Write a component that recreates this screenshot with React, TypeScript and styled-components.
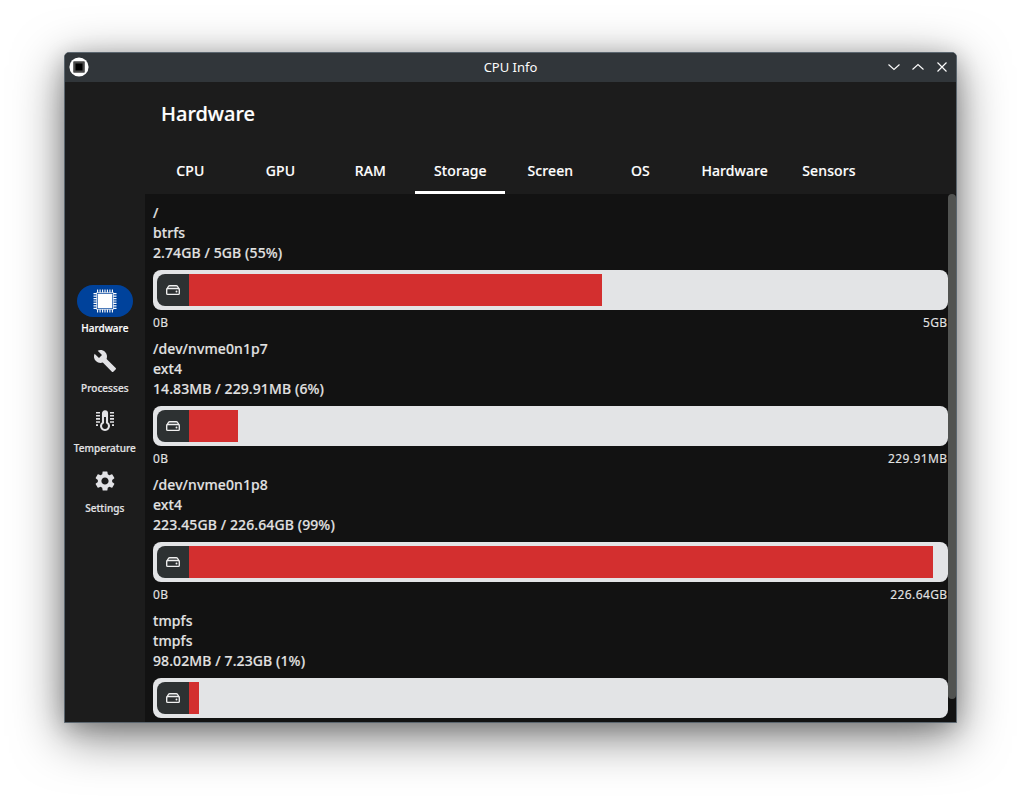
import React from "react";
import styled, { createGlobalStyle } from "styled-components";
import { MdBuild, MdSettings } from "react-icons/md";

const GlobalStyle = createGlobalStyle`
  *, *::before, *::after { box-sizing: border-box; }
  body { margin: 0; background: #fff; font-family: "Noto Sans", sans-serif; overflow: hidden; }
`;

const Desktop = styled.main`
  width: 1021px;
  height: 799px;
  padding: 52px 64px 76px;
`;

const AppWindow = styled.section`
  width: 893px;
  height: 671px;
  display: flex;
  flex-direction: column;
  border: 1px solid #5b666f;
  border-radius: 5px 5px 0 0;
  overflow: hidden;
  background: #121212;
  box-shadow: 0 13px 50px rgba(0, 0, 0, 0.52), 0 5px 22px rgba(0, 0, 0, 0.2);
`;

const TitleBar = styled.header`
  flex: 0 0 29px;
  display: grid;
  grid-template-columns: 80px 1fr 80px;
  align-items: center;
  padding: 0 4px 1px;
  background: #31363a;
  color: #fcfcfc;
`;

const WindowTitle = styled.span`
  text-align: center;
  font-size: 13px;
  line-height: 18px;
`;

const WindowControls = styled.div`
  display: flex;
  justify-content: flex-end;
  gap: 8px;
  padding-right: 2px;
`;

const Body = styled.div`
  flex: 1;
  min-height: 0;
  display: flex;
`;

const Rail = styled.nav`
  flex: 0 0 80px;
  display: flex;
  flex-direction: column;
  align-items: center;
  justify-content: center;
  gap: 4px;
  padding-top: 1px;
  background: #1c1c1c;
`;

const RailItem = styled.div`
  width: 80px;
  height: 56px;
  display: flex;
  flex-direction: column;
  align-items: center;
  gap: 3px;
  color: #e2e2e5;
`;

const RailIcon = styled.div<{ $active?: boolean }>`
  width: 56px;
  height: 32px;
  display: flex;
  align-items: center;
  justify-content: center;
  border-radius: 16px;
  background: ${(p) => (p.$active ? "#00429b" : "transparent")};
  color: ${(p) => (p.$active ? "#fff" : "#e2e2e5")};
`;

const RailLabel = styled.span<{ $active?: boolean }>`
  font-size: 10px;
  line-height: 16px;
  font-weight: 500;
  letter-spacing: 0.04px;
  -webkit-text-stroke: 0.2px currentColor;
  padding-right: 0.4px;
  white-space: nowrap;
  color: ${(p) => (p.$active ? "#fff" : "#e2e2e5")};
`;

const Page = styled.div`
  flex: 1;
  min-width: 0;
  display: flex;
  flex-direction: column;
`;

const PageHeader = styled.div`
  flex: 0 0 112px;
  display: flex;
  flex-direction: column;
  justify-content: space-between;
  background: #1c1c1c;
`;

const PageTitle = styled.h1`
  margin: 0;
  padding: 18px 16px 0;
  font-size: 20px;
  line-height: 28px;
  font-weight: 500;
  -webkit-text-stroke: 0.2px currentColor;
  color: #fff;
`;

const Tabs = styled.div`
  height: 48px;
  display: flex;
`;

const Tab = styled.div<{ $active?: boolean }>`
  min-width: 90px;
  padding: 3px 15.6px 0 16.4px;
  display: flex;
  align-items: center;
  justify-content: center;
  border-bottom: 3px solid ${(p) => (p.$active ? "#fff" : "transparent")};
  font-size: 14px;
  font-weight: 500;
  letter-spacing: 0.1px;
  -webkit-text-stroke: 0.15px currentColor;
  color: #fff;
`;

const ScrollArea = styled.div`
  flex: 1;
  min-height: 0;
  display: flex;
  overflow: hidden;
`;

const VolumeList = styled.div`
  flex: 1;
  min-width: 0;
  padding: 9px 0 0 8px;
`;

const ScrollThumb = styled.div`
  width: 8px;
  height: 505px;
  border-radius: 4px;
  background: #515351;
`;

const Volume = styled.article`
  color: #e2e2e2;
`;

const VolumeText = styled.p`
  margin: 0;
  font-size: 14px;
  line-height: 20px;
  font-weight: 500;
  letter-spacing: 0.1px;
  -webkit-text-stroke: 0.15px currentColor;
`;

const Meter = styled.div`
  height: 40px;
  margin-top: 7px;
  padding: 4px;
  display: flex;
  border-radius: 8px;
  background: #e3e4e6;
`;

const MeterIcon = styled.div`
  flex: 0 0 32px;
  display: flex;
  align-items: center;
  justify-content: center;
  border-radius: 8px 0 0 8px;
  background: #2d3132;
`;

const MeterTrack = styled.div`
  flex: 1;
`;

const MeterFill = styled.div`
  height: 100%;
  background: #d32f2f;
`;

const Scale = styled.div`
  display: flex;
  justify-content: space-between;
  padding: 5px 0.5px 8px 0;
  font-size: 12px;
  line-height: 16px;
  letter-spacing: 0.4px;
  -webkit-text-stroke: 0.12px currentColor;
`;

const AppLogo = () => (
  <svg width="20" height="20" viewBox="0 0 20 20">
    <circle cx="10" cy="10" r="9.6" fill="#fff" />
    <rect x="4.2" y="4.2" width="11.6" height="11.6" rx="0.8" fill="#4a4a4a" />
    <rect x="6.5" y="6.5" width="7" height="7" fill="#000" />
  </svg>
);

const ControlIcon = ({ d }: { d: string }) => (
  <svg width="16" height="16" viewBox="0 0 16 16" fill="none" stroke="#fcfcfc" strokeWidth="1.15">
    <path d={d} />
  </svg>
);

const pinOffsets = [4.6, 7.1, 9.6, 12, 14.4, 16.9, 19.4];

const ChipIcon = () => (
  <svg width="24" height="24" viewBox="0 0 24 24" fill="currentColor">
    <rect x="4.7" y="4.7" width="14.6" height="14.6" rx="0.5" />
    <path d="M3.6 3.6h16.8v16.8H3.6z" fill="none" stroke="currentColor" strokeWidth="0.9" opacity="0.75" />
    {pinOffsets.map((p) => (
      <path key={p} d={`M${p} .5v3.3M${p} 20.2v3.3M.5 ${p}h3.3M20.2 ${p}h3.3`} stroke="currentColor" strokeWidth="1.1" />
    ))}
  </svg>
);

const ThermometerIcon = () => (
  <svg width="24" height="24" viewBox="0 0 24 24" fill="none" stroke="currentColor">
    <path d="M10 13.6V4.3a2 2 0 0 1 4 0v9.3a4 4 0 1 1-4 0Z" strokeWidth="2.1" />
    <path d="M12 3v5" strokeWidth="3" />
    <path
      d="M3 3.7h4M3 6.8h4M3 9.9h4M3 13h4M3 16.1h2M17 3.7h4M17 6.8h4M17 9.9h4M17 13h4M19 16.1h2"
      strokeWidth="1.6"
    />
  </svg>
);

const DriveIcon = () => (
  <svg width="16" height="16" viewBox="0 0 16 16" fill="none" stroke="#f0f0f0" strokeWidth="1.35">
    <path d="M2 6.8 3.4 4.5Q3.9 3.7 4.8 3.7h6.4q.9 0 1.4.8L14 6.8" />
    <rect x="1.7" y="6.5" width="12.6" height="5.9" rx="1" />
    <circle cx="11.5" cy="9.5" r=".95" fill="#f0f0f0" stroke="none" />
  </svg>
);

const railItems = [
  { label: "Hardware", icon: <ChipIcon />, active: true },
  { label: "Processes", icon: <MdBuild size={24} /> },
  { label: "Temperature", icon: <ThermometerIcon /> },
  { label: "Settings", icon: <MdSettings size={24} /> },
];

const tabs = ["CPU", "GPU", "RAM", "Storage", "Screen", "OS", "Hardware", "Sensors"];

const volumes = [
  { name: "/", type: "btrfs", usage: "2.74GB / 5GB (55%)", total: "5GB", fill: 54.75 },
  { name: "/dev/nvme0n1p7", type: "ext4", usage: "14.83MB / 229.91MB (6%)", total: "229.91MB", fill: 6.45 },
  { name: "/dev/nvme0n1p8", type: "ext4", usage: "223.45GB / 226.64GB (99%)", total: "226.64GB", fill: 98.59 },
  { name: "tmpfs", type: "tmpfs", usage: "98.02MB / 7.23GB (1%)", fill: 1.32 },
];

export default function App() {
  return (
    <Desktop>
      <GlobalStyle />
      <AppWindow>
        <TitleBar>
          <AppLogo />
          <WindowTitle>CPU Info</WindowTitle>
          <WindowControls>
            <ControlIcon d="m2.5 5.5 5.5 5 5.5-5" />
            <ControlIcon d="m2.5 10.5 5.5-5 5.5 5" />
            <ControlIcon d="m3.5 3.5 9 9m0-9-9 9" />
          </WindowControls>
        </TitleBar>
        <Body>
          <Rail>
            {railItems.map((item) => (
              <RailItem key={item.label}>
                <RailIcon $active={item.active}>{item.icon}</RailIcon>
                <RailLabel $active={item.active}>{item.label}</RailLabel>
              </RailItem>
            ))}
          </Rail>
          <Page>
            <PageHeader>
              <PageTitle>Hardware</PageTitle>
              <Tabs>
                {tabs.map((tab) => (
                  <Tab key={tab} $active={tab === "Storage"}>{tab}</Tab>
                ))}
              </Tabs>
            </PageHeader>
            <ScrollArea>
              <VolumeList>
                {volumes.map((v) => (
                  <Volume key={v.name}>
                    <VolumeText>{v.name}</VolumeText>
                    <VolumeText>{v.type}</VolumeText>
                    <VolumeText>{v.usage}</VolumeText>
                    <Meter>
                      <MeterIcon><DriveIcon /></MeterIcon>
                      <MeterTrack>
                        <MeterFill style={{ width: `${v.fill}%` }} />
                      </MeterTrack>
                    </Meter>
                    {v.total && (
                      <Scale>
                        <span>0B</span>
                        <span>{v.total}</span>
                      </Scale>
                    )}
                  </Volume>
                ))}
              </VolumeList>
              <ScrollThumb />
            </ScrollArea>
          </Page>
        </Body>
      </AppWindow>
    </Desktop>
  );
}
